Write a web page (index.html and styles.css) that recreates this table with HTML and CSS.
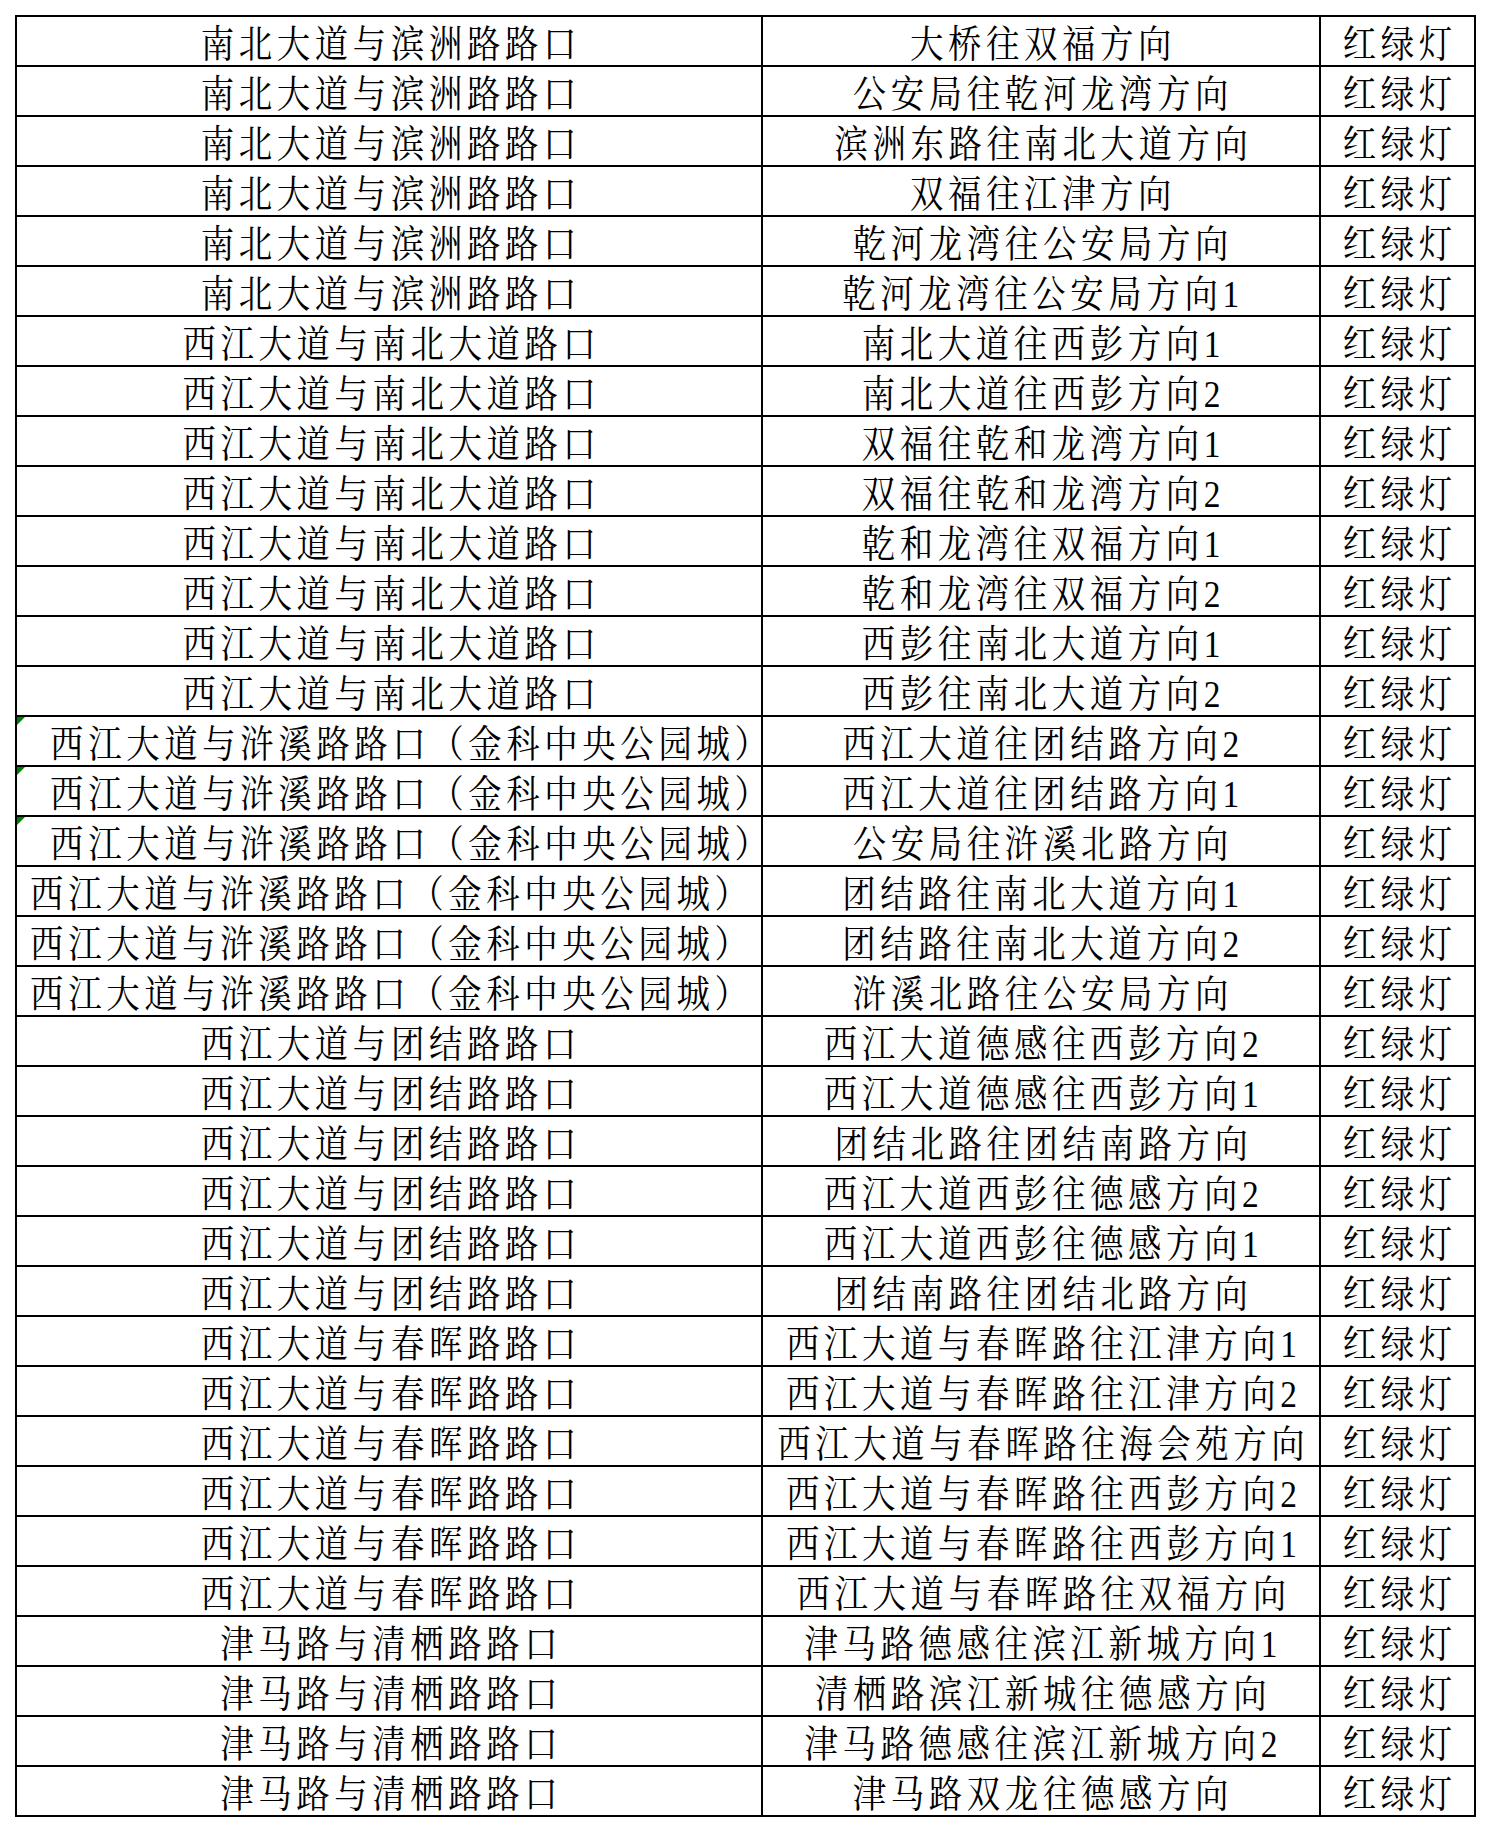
FILE: index.html
```html
<!DOCTYPE html>
<html lang="zh-CN">
<head>
<meta charset="utf-8">
<title>红绿灯点位表</title>
<link rel="stylesheet" href="styles.css">
</head>
<body>
<div class="sheet">
<div class="c"><span>南北大道与滨洲路路口</span></div><div class="c"><span>大桥往双福方向</span></div><div class="c"><span>红绿灯</span></div>
<div class="c"><span>南北大道与滨洲路路口</span></div><div class="c"><span>公安局往乾河龙湾方向</span></div><div class="c"><span>红绿灯</span></div>
<div class="c"><span>南北大道与滨洲路路口</span></div><div class="c"><span>滨洲东路往南北大道方向</span></div><div class="c"><span>红绿灯</span></div>
<div class="c"><span>南北大道与滨洲路路口</span></div><div class="c"><span>双福往江津方向</span></div><div class="c"><span>红绿灯</span></div>
<div class="c"><span>南北大道与滨洲路路口</span></div><div class="c"><span>乾河龙湾往公安局方向</span></div><div class="c"><span>红绿灯</span></div>
<div class="c"><span>南北大道与滨洲路路口</span></div><div class="c"><span>乾河龙湾往公安局方向1</span></div><div class="c"><span>红绿灯</span></div>
<div class="c"><span>西江大道与南北大道路口</span></div><div class="c"><span>南北大道往西彭方向1</span></div><div class="c"><span>红绿灯</span></div>
<div class="c"><span>西江大道与南北大道路口</span></div><div class="c"><span>南北大道往西彭方向2</span></div><div class="c"><span>红绿灯</span></div>
<div class="c"><span>西江大道与南北大道路口</span></div><div class="c"><span>双福往乾和龙湾方向1</span></div><div class="c"><span>红绿灯</span></div>
<div class="c"><span>西江大道与南北大道路口</span></div><div class="c"><span>双福往乾和龙湾方向2</span></div><div class="c"><span>红绿灯</span></div>
<div class="c"><span>西江大道与南北大道路口</span></div><div class="c"><span>乾和龙湾往双福方向1</span></div><div class="c"><span>红绿灯</span></div>
<div class="c"><span>西江大道与南北大道路口</span></div><div class="c"><span>乾和龙湾往双福方向2</span></div><div class="c"><span>红绿灯</span></div>
<div class="c"><span>西江大道与南北大道路口</span></div><div class="c"><span>西彭往南北大道方向1</span></div><div class="c"><span>红绿灯</span></div>
<div class="c"><span>西江大道与南北大道路口</span></div><div class="c"><span>西彭往南北大道方向2</span></div><div class="c"><span>红绿灯</span></div>
<div class="c flag"><span>西江大道与浒溪路路口（金科中央公园城）</span></div><div class="c"><span>西江大道往团结路方向2</span></div><div class="c"><span>红绿灯</span></div>
<div class="c flag"><span>西江大道与浒溪路路口（金科中央公园城）</span></div><div class="c"><span>西江大道往团结路方向1</span></div><div class="c"><span>红绿灯</span></div>
<div class="c flag"><span>西江大道与浒溪路路口（金科中央公园城）</span></div><div class="c"><span>公安局往浒溪北路方向</span></div><div class="c"><span>红绿灯</span></div>
<div class="c"><span>西江大道与浒溪路路口（金科中央公园城）</span></div><div class="c"><span>团结路往南北大道方向1</span></div><div class="c"><span>红绿灯</span></div>
<div class="c"><span>西江大道与浒溪路路口（金科中央公园城）</span></div><div class="c"><span>团结路往南北大道方向2</span></div><div class="c"><span>红绿灯</span></div>
<div class="c"><span>西江大道与浒溪路路口（金科中央公园城）</span></div><div class="c"><span>浒溪北路往公安局方向</span></div><div class="c"><span>红绿灯</span></div>
<div class="c"><span>西江大道与团结路路口</span></div><div class="c"><span>西江大道德感往西彭方向2</span></div><div class="c"><span>红绿灯</span></div>
<div class="c"><span>西江大道与团结路路口</span></div><div class="c"><span>西江大道德感往西彭方向1</span></div><div class="c"><span>红绿灯</span></div>
<div class="c"><span>西江大道与团结路路口</span></div><div class="c"><span>团结北路往团结南路方向</span></div><div class="c"><span>红绿灯</span></div>
<div class="c"><span>西江大道与团结路路口</span></div><div class="c"><span>西江大道西彭往德感方向2</span></div><div class="c"><span>红绿灯</span></div>
<div class="c"><span>西江大道与团结路路口</span></div><div class="c"><span>西江大道西彭往德感方向1</span></div><div class="c"><span>红绿灯</span></div>
<div class="c"><span>西江大道与团结路路口</span></div><div class="c"><span>团结南路往团结北路方向</span></div><div class="c"><span>红绿灯</span></div>
<div class="c"><span>西江大道与春晖路路口</span></div><div class="c"><span>西江大道与春晖路往江津方向1</span></div><div class="c"><span>红绿灯</span></div>
<div class="c"><span>西江大道与春晖路路口</span></div><div class="c"><span>西江大道与春晖路往江津方向2</span></div><div class="c"><span>红绿灯</span></div>
<div class="c"><span>西江大道与春晖路路口</span></div><div class="c"><span>西江大道与春晖路往海会苑方向</span></div><div class="c"><span>红绿灯</span></div>
<div class="c"><span>西江大道与春晖路路口</span></div><div class="c"><span>西江大道与春晖路往西彭方向2</span></div><div class="c"><span>红绿灯</span></div>
<div class="c"><span>西江大道与春晖路路口</span></div><div class="c"><span>西江大道与春晖路往西彭方向1</span></div><div class="c"><span>红绿灯</span></div>
<div class="c"><span>西江大道与春晖路路口</span></div><div class="c"><span>西江大道与春晖路往双福方向</span></div><div class="c"><span>红绿灯</span></div>
<div class="c"><span>津马路与清栖路路口</span></div><div class="c"><span>津马路德感往滨江新城方向1</span></div><div class="c"><span>红绿灯</span></div>
<div class="c"><span>津马路与清栖路路口</span></div><div class="c"><span>清栖路滨江新城往德感方向</span></div><div class="c"><span>红绿灯</span></div>
<div class="c"><span>津马路与清栖路路口</span></div><div class="c"><span>津马路德感往滨江新城方向2</span></div><div class="c"><span>红绿灯</span></div>
<div class="c"><span>津马路与清栖路路口</span></div><div class="c"><span>津马路双龙往德感方向</span></div><div class="c"><span>红绿灯</span></div>
</div>
</body>
</html>
```
FILE: styles.css
```css
html, body {
  margin: 0;
  padding: 0;
  background: #ffffff;
}

body {
  padding: 15px 0 0 15px;
  font-family: "Liberation Serif", "Noto Serif CJK SC", "Noto Sans CJK SC", serif;
  color: #000000;
}

.sheet {
  display: grid;
  grid-template-columns: 746px 558px 155px;
  grid-auto-rows: 50px;
  width: max-content;
  border-left: 2px solid #000;
  border-top: 2px solid #000;
}

.c {
  position: relative;
  box-sizing: border-box;
  border-right: 2px solid #000;
  border-bottom: 2px solid #000;
  display: flex;
  justify-content: center;
  align-items: center;
  padding-top: 6px;
  white-space: nowrap;
}

.c span {
  flex-shrink: 0;
  display: inline-block;
  font-size: 38px;
  line-height: 44px;
  font-weight: 400;
  letter-spacing: 5.2px;
  padding-left: 5.2px;
  transform: scaleX(0.88);
}

.flag {
  padding-left: 39px;
}

.flag::before {
  content: "";
  position: absolute;
  top: 0;
  left: 0;
  width: 0;
  height: 0;
  border-top: 8px solid #008000;
  border-right: 8px solid transparent;
}
```
